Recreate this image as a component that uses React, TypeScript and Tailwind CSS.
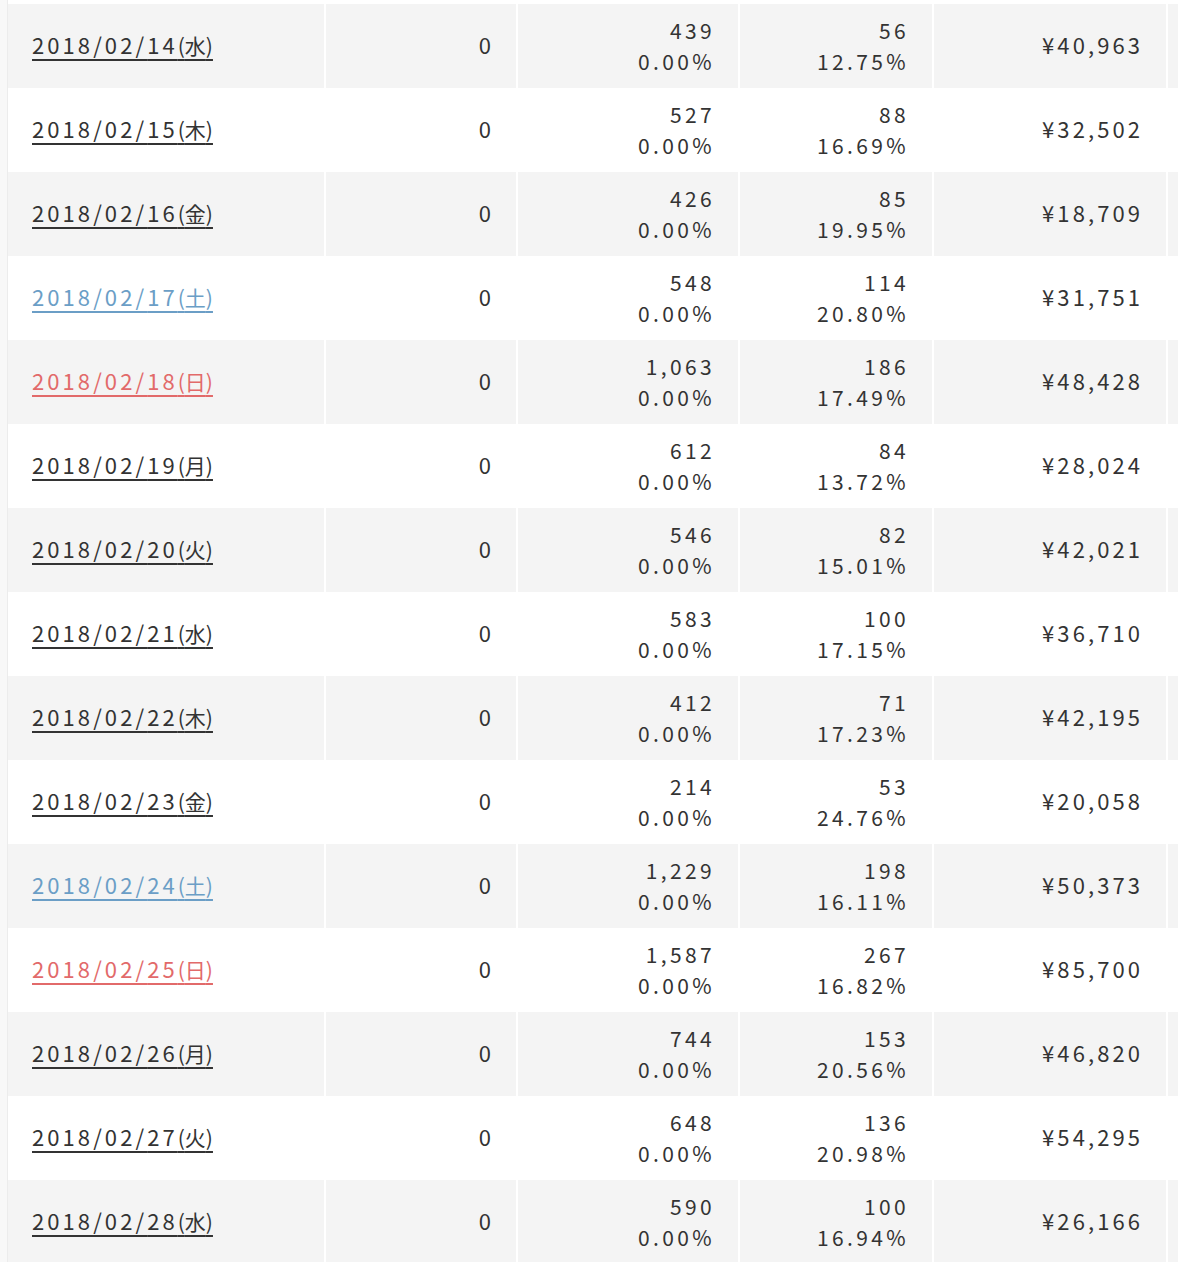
import React from "react";

type Row = {
  day: string;
  wd: string;
  pv: string;
  cv: string;
  rate: string;
  sales: string;
};

const rows: Row[] = [
  { day: "14", wd: "水", pv: "439", cv: "56", rate: "12.75%", sales: "¥40,963" },
  { day: "15", wd: "木", pv: "527", cv: "88", rate: "16.69%", sales: "¥32,502" },
  { day: "16", wd: "金", pv: "426", cv: "85", rate: "19.95%", sales: "¥18,709" },
  { day: "17", wd: "土", pv: "548", cv: "114", rate: "20.80%", sales: "¥31,751" },
  { day: "18", wd: "日", pv: "1,063", cv: "186", rate: "17.49%", sales: "¥48,428" },
  { day: "19", wd: "月", pv: "612", cv: "84", rate: "13.72%", sales: "¥28,024" },
  { day: "20", wd: "火", pv: "546", cv: "82", rate: "15.01%", sales: "¥42,021" },
  { day: "21", wd: "水", pv: "583", cv: "100", rate: "17.15%", sales: "¥36,710" },
  { day: "22", wd: "木", pv: "412", cv: "71", rate: "17.23%", sales: "¥42,195" },
  { day: "23", wd: "金", pv: "214", cv: "53", rate: "24.76%", sales: "¥20,058" },
  { day: "24", wd: "土", pv: "1,229", cv: "198", rate: "16.11%", sales: "¥50,373" },
  { day: "25", wd: "日", pv: "1,587", cv: "267", rate: "16.82%", sales: "¥85,700" },
  { day: "26", wd: "月", pv: "744", cv: "153", rate: "20.56%", sales: "¥46,820" },
  { day: "27", wd: "火", pv: "648", cv: "136", rate: "20.98%", sales: "¥54,295" },
  { day: "28", wd: "水", pv: "590", cv: "100", rate: "16.94%", sales: "¥26,166" },
];

const dateColor = (wd: string) =>
  wd === "土" ? "text-[#6b9ec6]" : wd === "日" ? "text-[#e26a6a]" : "text-[#333333]";

const App: React.FC = () => {
  return (
    <div
      className="flex min-h-screen w-full overflow-hidden bg-white text-[#333333]"
      style={{ fontFamily: '"Noto Sans CJK JP", "Liberation Sans", sans-serif' }}
    >
      {/* left gutter */}
      <div className="w-[8px] shrink-0 border-r border-[#ececec] bg-[#f8f8f8]" />

      <div className="flex-1 pt-[4px]">
        {rows.map((r, i) => {
          const cell = i % 2 === 0 ? "bg-[#f4f4f4]" : "bg-white";
          return (
            <div
              key={r.day}
              className="grid h-[84px] grid-cols-[316px_190px_220px_192px_232px_1fr] gap-x-[2px] bg-white text-[22px] leading-[28px] tracking-[0.14em]"
            >
              {/* date */}
              <div className={`${cell} flex items-center pb-[4px] pl-[24px]`}>
                <a
                  href="#"
                  className={`${dateColor(r.wd)} underline decoration-[2px] underline-offset-[5px]`}
                >
                  2018/02/{r.day}
                  <span className="text-[21px] tracking-normal">({r.wd})</span>
                </a>
              </div>

              {/* count */}
              <div className={`${cell} flex items-center justify-end pb-[4px] pr-[22px]`}>0</div>

              {/* pv */}
              <div
                className={`${cell} flex flex-col items-end justify-center pr-[23px] text-[21px] leading-[31px] tracking-[0.16em]`}
              >
                <span>{r.pv}</span>
                <span>0.00%</span>
              </div>

              {/* cv */}
              <div
                className={`${cell} flex flex-col items-end justify-center pr-[23px] text-[21px] leading-[31px] tracking-[0.16em]`}
              >
                <span>{r.cv}</span>
                <span>{r.rate}</span>
              </div>

              {/* sales */}
              <div className={`${cell} flex items-center justify-end pb-[4px] pr-[23px]`}>{r.sales}</div>

              <div className={cell} />
            </div>
          );
        })}
      </div>
    </div>
  );
};

export default App;
